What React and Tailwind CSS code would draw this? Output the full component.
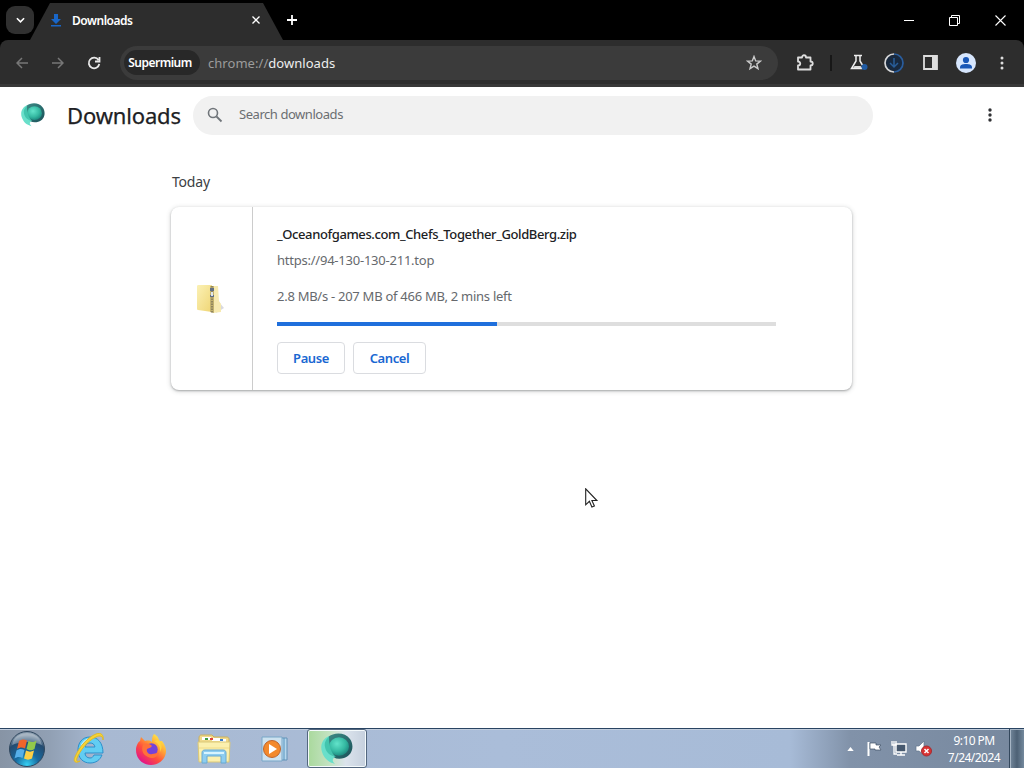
import React, { useState } from 'react';

const PROGRESS = 44;

const SupermiumLogo = ({ id, className }) => (
  <svg viewBox="0 0 32 32" className={className}>
    <defs>
      <radialGradient id={`${id}-ball`} cx="0.4" cy="0.35" r="0.7">
        <stop offset="0" stopColor="#62e3ca" />
        <stop offset="0.6" stopColor="#35b9a2" />
        <stop offset="1" stopColor="#1a857c" />
      </radialGradient>
      <linearGradient id={`${id}-dark`} x1="0" y1="0" x2="1" y2="1">
        <stop offset="0" stopColor="#3c8b86" />
        <stop offset="1" stopColor="#1a5058" />
      </linearGradient>
    </defs>
    <path d="M7 4C13-1 24-1 29 6c5 7 2 17-6 19-6 2-12 0-15-5Z" fill={`url(#${id}-dark)`} />
    <path d="M8 3C1 6-1 13 1 19c2 6 6 10 13 12-3-3-3-5 0-7C9 20 6 12 8 3Z" fill="#69dfca" />
    <ellipse cx="18" cy="13.5" rx="10" ry="9.2" fill={`url(#${id}-ball)`} />
    <path d="M8 4c0 9 2 16 7 20-5-1-10-4-11-10-1-4 1-8 4-10Z" fill="#43c5ae" />
  </svg>
);

const ZipFolder = () => (
  <svg viewBox="0 0 32 32" className="w-8 h-8">
    <defs>
      <linearGradient id="zip-face" x1="0" y1="0" x2="1" y2="1">
        <stop offset="0" stopColor="#fbf1b5" />
        <stop offset="1" stopColor="#efd574" />
      </linearGradient>
    </defs>
    <path d="m22 30 8-5-5-6Z" fill="#c9c9d2" opacity=".7" />
    <path d="M18 3h6l1 15 2 3v8l-8 1Z" fill="#f7eab0" />
    <path d="M3 3c0-1 1-1 2-1h13v27L4 27c-1 0-1-1-1-2Z" fill="url(#zip-face)" />
    <path d="M16 3h4v27l-4-1Z" fill="#c3b26f" />
    <path d="M18 3v27" stroke="#81785a" strokeWidth="1.5" strokeDasharray="1.5 1" />
    <path d="M16 5h4v3h-4zM16 12h4v2h-4z" fill="#627084" />
    <path d="M17 9h2v4h-2z" fill="#dfe5e9" />
  </svg>
);

const StartOrb = () => (
  <svg viewBox="0 0 38 38" className="w-[38px] h-[38px]">
    <defs>
      <radialGradient id="orb" cx="0.5" cy="0.95" r="0.85">
        <stop offset="0" stopColor="#35d0f4" />
        <stop offset="0.4" stopColor="#17699f" />
        <stop offset="0.8" stopColor="#244b70" />
        <stop offset="1" stopColor="#8296a9" />
      </radialGradient>
    </defs>
    <circle cx="19" cy="19" r="17.5" fill="url(#orb)" stroke="#30475e" />
    <path d="M4 15C6 6 13 3 19 3s13 3 15 12c-9-4-21-4-30 0Z" fill="#fff" opacity=".3" />
    <path d="M11 11c3-2 5-2 8-.5l-2 8c-3-1.500-5-1.500-8 .5Z" fill="#f0642b" />
    <path d="M20.500 11c3 1.500 5 1.500 8-.5l-2 8.500c-3 2-5 1.500-8 0Z" fill="#91c84b" />
    <path d="M8.500 20.500c3-2 5-2 8-.5l-2 8c-3-1.500-5-1.500-8 .5Z" fill="#56afe9" />
    <path d="M18 20.500c3 1.500 5 1.500 8 0l-2 8c-3 1.500-5 1.500-8 0Z" fill="#fdcf45" />
  </svg>
);

const InternetExplorer = () => (
  <svg viewBox="0 0 32 32" className="w-8 h-8">
    <path d="M17 4C9 4 5 10 5 17c0 8 5 13 12 13 6 0 10-3 12-8h-8c-1 2-2 3-4 3-3 0-5-2-5-5h18C30 10 25 4 17 4Zm-5 10c1-3 2-4 5-4s4 1 5 4Z" fill="#62cdf2" stroke="#2c8fcb" strokeWidth="1" fillRule="evenodd" />
    <path d="M8 15C9 9 13 6 18 6" fill="none" stroke="#b8eefb" strokeWidth="1.500" />
    <path d="M30 7c0-4-3-5-7-3C14 8 7 18 4 25c-1 3 0 4 3 3-5 3-7 0-5-4C6 14 15 4 23 1c5-2 8 1 7 6Z" fill="#f7d335" stroke="#dfb928" strokeWidth="1" />
  </svg>
);

const Firefox = () => (
  <svg viewBox="0 0 32 32" className="w-8 h-8">
    <defs>
      <linearGradient id="fox" x1="0.85" y1="0.05" x2="0.2" y2="0.9">
        <stop offset="0" stopColor="#fff44f" />
        <stop offset="0.35" stopColor="#ffa436" />
        <stop offset="0.65" stopColor="#ff4f3c" />
        <stop offset="1" stopColor="#e31587" />
      </linearGradient>
    </defs>
    <path d="M19 1c4 2 5 5 5 7l3 0c3 4 4 7 4 10 0 8-7 14-15 14S1 26 1 17c0-4 2-8 4-9l1-4 4 4c4-1 6 0 7 1 0-3 0-6 2-8Z" fill="url(#fox)" />
    <circle cx="16.500" cy="16.5" r="6.2" fill="#7542d9" />
    <path d="M8 12c3-3 7-1 9 1-1 2-4 2-5 3-1 3 2 6 5 5 3 0 5-2 7-1-2 5-7 6-11 4-5-2-7-7-5-12Z" fill="#ff7139" />
    <path d="M19 8c4 2 7 6 6 11 2-3 2-7 1-10l-3-3c-1 1-2 2-4 2Z" fill="#ffd13f" />
  </svg>
);

const Explorer = () => (
  <svg viewBox="0 0 34 30" className="w-[34px] h-[30px]">
    <path d="M2 4c0-2 1-3 2-3h11l2 2h13c1 0 2 1 2 2v21H2Z" fill="#f0d98a" stroke="#c9b05e" />
    <path d="M5 3h9v3H5zM15 4h8v3h-8zM23 5h6v3h-6z" fill="#fff" />
    <path d="M8 4h3v2H8z" fill="#409d42" />
    <path d="M13 4h3v2h-3z" fill="#df423b" />
    <path d="M23 5h3v2h-3z" fill="#397dcc" />
    <path d="M1 8h32l-1 20H2Z" fill="#fbf0ae" stroke="#dbc879" />
    <path d="M2 14h30" stroke="#f1dc88" />
    <path d="M5 29V19c0-2 1-3 3-3h18c2 0 3 1 3 3v10h-5v-7H10v7Z" fill="#8dcdf0" stroke="#68a9d2" />
    <path d="M7 19h20" stroke="#d7f4ff" strokeWidth="2" />
  </svg>
);

const MediaPlayer = () => (
  <svg viewBox="0 0 28 26" className="w-7 h-[26px]">
    <path d="M8 2h18v22H8z" fill="#b7d8ee" stroke="#6292b7" />
    <path d="M23 2v22M20 2v22" stroke="#5793bd" />
    <path d="M1 1h20v24H1z" fill="#cde2ef" stroke="#78a7c8" />
    <circle cx="11" cy="13" r="8.500" fill="#f3892b" stroke="#bf652d" />
    <path d="m8 8 8 5-8 5Z" fill="#fff" />
  </svg>
);

const TabStrip = () => (
  <div className="flex h-10 bg-black text-white">
    <button className="flex items-center justify-center w-7 h-7 ml-1.5 mt-1.5 rounded-[9px] bg-[#303030]">
      <svg viewBox="0 0 10 6" className="w-[9px] h-[6px]"><path d="m1 1 4 4 4-4" fill="none" stroke="#fff" strokeWidth="1.800" /></svg>
    </button>
    <div className="flex items-center w-[253px] h-[37px] -ml-1 mt-[3px] pl-5 pr-[23px] bg-[#2d2d2d] [clip-path:polygon(20px_0,233px_0,253px_100%,0_100%)]">
      <svg viewBox="0 0 12 14" className="w-3 h-3.5 mb-1"><path d="M4 1h4v5h3l-5 5-5-5h3ZM1 12h10v1.500H1Z" fill="#1966c7" /></svg>
      <span className="ml-[10px] mb-[2px] text-[12px] font-semibold tracking-[-0.48px]">Downloads</span>
      <svg viewBox="0 0 8 8" className="w-2 h-2 ml-auto mb-[3px]"><path d="m.5.5 7 7m0-7-7 7" stroke="#fff" strokeWidth="1.300" /></svg>
    </div>
    <svg viewBox="0 0 10 10" className="w-2.5 h-2.5 mt-[15px] ml-1"><path d="M5 0v10M0 5h10" stroke="#fff" strokeWidth="1.800" /></svg>
    <div className="flex items-center gap-[35px] h-10 ml-auto mr-[18px]">
      <svg viewBox="0 0 10 10" className="w-2.5 h-2.5"><path d="M0 5.500h10" stroke="#fff" /></svg>
      <svg viewBox="0 0 11 11" className="w-[11px] h-[11px]"><path d="M.5 2.500h8v8h-8ZM2.500 2.500v-2h8v8h-2" fill="none" stroke="#fff" /></svg>
      <svg viewBox="0 0 11 11" className="w-[11px] h-[11px]"><path d="m.5.5 10 10m0-10-10 10" stroke="#fff" strokeWidth="1.100" /></svg>
    </div>
  </div>
);

const Toolbar = () => (
  <div className="bg-black">
    <div className="flex items-center h-[47px] pt-px bg-[#2d2d2d] rounded-t-lg border-b-[3px] border-[#383838]">
      <svg viewBox="0 0 12 12" className="w-3 h-3 ml-4"><path d="M12 6H1m5-5L1 6l5 5" fill="none" stroke="#777" strokeWidth="1.500" /></svg>
      <svg viewBox="0 0 12 12" className="w-3 h-3 ml-6"><path d="M0 6h11M6 1l5 5-5 5" fill="none" stroke="#777" strokeWidth="1.500" /></svg>
      <svg viewBox="0 0 14 14" className="w-3.5 h-3.5 ml-[23px]"><path d="M11.500 4A5.300 5.300 0 1 0 12.300 8M12.500 1v4.500H8" fill="none" stroke="#e8e8e8" strokeWidth="1.800" /></svg>
      <div className="flex items-center w-[658px] h-[34px] ml-[19px] pl-1 pr-4 rounded-full bg-[#3b3b3b]">
        <span className="flex items-center justify-center w-[76px] h-[25px] pr-1 rounded-full bg-[#282828] text-[12px] font-semibold text-white tracking-[-0.5px]">Supermium</span>
        <span className="ml-2 text-[13px] text-[#9c9c9c] leading-5 tracking-[0.04px]">chrome://<span className="text-[#eee]">downloads</span></span>
        <svg viewBox="0 0 16 16" className="w-4 h-4 ml-auto"><path d="m8 1.500 1.700 4.400 4.800.2-3.700 3 1.200 4.600L8 11.100l-4 2.600 1.200-4.600-3.700-3 4.800-.2Z" fill="none" stroke="#ccc" strokeWidth="1.400" /></svg>
      </div>
      <svg viewBox="0 0 18 18" className="w-[18px] h-[18px] ml-[18px]"><path d="M2 3.500h4c0-3 4-3 4 0h4.500v4c3 0 3 4 0 4v4H2v-4c3 0 3-4 0-4Z" fill="none" stroke="#ddd" strokeWidth="1.800" strokeLinejoin="round" /></svg>
      <div className="w-0.5 h-4 ml-4 bg-[#171717]" />
      <svg viewBox="0 0 18 17" className="w-[18px] h-[17px] ml-[18px]">
        <path d="M4 1.500h8M6 2v5l-4.500 7.500h11M10 2v5l3 5" fill="none" stroke="#eee" strokeWidth="1.500" />
        <path d="M4.500 12h6l2 2h-9.500Z" fill="#ddd" />
        <circle cx="14.500" cy="13" r="3" fill="#205ba3" />
      </svg>
      <svg viewBox="0 0 20 20" className="w-5 h-5 ml-4">
        <circle cx="10" cy="10" r="8" fill="#18293f" />
        <path d="M10 1a9 9 0 0 0 0 18" fill="none" stroke="#d5d7da" strokeWidth="1.700" />
        <path d="M10 1a9 9 0 0 1 0 18" fill="none" stroke="#295d9e" strokeWidth="1.700" />
        <path d="M10 5v9m-4-4 4 4 4-4" fill="none" stroke="#285d99" strokeWidth="1.500" />
      </svg>
      <svg viewBox="0 0 15 15" className="w-[15px] h-[15px] ml-[19px]"><path d="M1 1h13v13H1Z" fill="none" stroke="#ddd" strokeWidth="1.800" /><path d="M9 1h5v13H9Z" fill="#ddd" /></svg>
      <svg viewBox="0 0 20 20" className="w-5 h-5 ml-[18px]"><circle cx="10" cy="10" r="10" fill="#d7e6fd" /><circle cx="10" cy="7" r="3.100" fill="#1957b7" /><path d="M4 14.500c0-3 3-3.500 6-3.500s6 .5 6 3.500v1H4Z" fill="#1957b7" /></svg>
      <svg viewBox="0 0 4 14" className="w-1 h-3.5 ml-6" fill="#ddd"><circle cx="2" cy="2" r="1.500" /><circle cx="2" cy="7" r="1.500" /><circle cx="2" cy="12" r="1.500" /></svg>
    </div>
  </div>
);

const PageHeader = ({ query, setQuery }) => (
  <div className="flex items-center h-[57px] pb-px">
    <SupermiumLogo id="page" className="w-6 h-6 ml-[21px]" />
    <h1 className="w-[114px] ml-[22px] text-[22px] leading-7 tracking-[-0.15px] text-[#202124] [-webkit-text-stroke:0.25px_#202124] whitespace-nowrap">Downloads</h1>
    <label className="flex items-center w-[680px] h-[39px] ml-3 rounded-full bg-[#f1f1f1]">
      <svg viewBox="0 0 16 16" className="w-4 h-4 ml-3.5 mb-px"><circle cx="6" cy="6" r="4.500" fill="none" stroke="#70757a" strokeWidth="1.600" /><path d="m9.500 9.500 5 5" stroke="#70757a" strokeWidth="1.800" /></svg>
      <input
        value={query}
        onChange={(e) => setQuery(e.target.value)}
        placeholder="Search downloads"
        className="flex-1 ml-4 text-[13px] tracking-[-0.45px] outline-none placeholder:text-[#6b6e72]"
      />
    </label>
    <svg viewBox="0 0 4 14" className="w-1 h-3.5 ml-[115px]" fill="#303134"><circle cx="2" cy="2" r="1.700" /><circle cx="2" cy="7" r="1.700" /><circle cx="2" cy="12" r="1.700" /></svg>
  </div>
);

const DownloadCard = () => (
  <div className="flex w-[681px] h-[183px] mt-[15px] -ml-px rounded-lg bg-white shadow-[0_1px_2px_rgba(60,64,67,.35),0_1px_4px_1px_rgba(60,64,67,.17)]">
    <div className="flex items-center justify-center w-[82px] pr-1 border-r border-[#ccc]">
      <ZipFolder />
    </div>
    <div className="pl-6 pt-[17px] text-[13px] text-[#66696d]">
      <div className="leading-5 font-medium text-[#202124] tracking-[-0.39px]">_Oceanofgames.com_Chefs_Together_GoldBerg.zip</div>
      <div className="mt-1.5 leading-5 tracking-[-0.23px]">https://94-130-130-211.top</div>
      <div className="mt-4 leading-5 tracking-[-0.27px]">2.8 MB/s - 207 MB of 466 MB, 2 mins left</div>
      <div className="w-[499px] h-1 mt-4 bg-[#dedede]">
        <div className="h-full bg-[#1f6fdc]" style={{ width: `${PROGRESS}%` }} />
      </div>
      <div className="flex gap-2 mt-4 font-semibold text-[#1967d2] tracking-[-0.4px]">
        <button className="w-[68px] h-8 pt-px rounded border border-[#dadce0]">Pause</button>
        <button className="w-[73px] h-8 pt-px rounded border border-[#dadce0]">Cancel</button>
      </div>
    </div>
  </div>
);

const Taskbar = () => (
  <div className="flex items-center h-10 border-t border-[#294462] shadow-[inset_0_1px_0_#c2cede] bg-[linear-gradient(90deg,#8794a5_0,#91a0b4_50px,#a8b9d2_100px,#aabdd9_500px,#a7bbd7_790px,#8192a9_850px,#77889e_100%)]">
    <div className="w-[38px] ml-2"><StartOrb /></div>
    <div className="ml-[27px]"><InternetExplorer /></div>
    <div className="ml-[30px]"><Firefox /></div>
    <div className="ml-[30px]"><Explorer /></div>
    <div className="ml-[30px]"><MediaPlayer /></div>
    <div className="flex items-center justify-center w-[60px] h-[39px] ml-[18px] rounded-[3px] border border-[#53677f] shadow-[inset_0_0_0_1px_#f4fafc] bg-[linear-gradient(90deg,#a9d99c,#c6e3c5_40%,#dbe3ec_65%,#c5d0de)]">
      <SupermiumLogo id="task" className="w-8 h-8" />
    </div>
    <svg viewBox="0 0 8 5" className="w-[7px] h-[4px] ml-auto"><path d="m0 5 4-5 4 5Z" fill="#fff" /></svg>
    <svg viewBox="0 0 16 16" className="w-4 h-4 ml-[13px]"><path d="M1.500 1v14" stroke="#fff" strokeWidth="2" /><path d="M3 2h6v2h5l-2 2 2 3H8V8H3Z" fill="#fff" stroke="#405065" strokeWidth=".7" /></svg>
    <svg viewBox="0 0 17 17" className="w-[17px] h-[17px] ml-2"><path d="M5 4h10v8H5ZM10 12v3m-4 0h8" fill="#46586e" stroke="#fff" strokeWidth="1.400" /><path d="M1 1v4h4V1M3 1v13h3" fill="none" stroke="#fff" strokeWidth="1.300" /></svg>
    <svg viewBox="0 0 18 18" className="w-[18px] h-[18px] ml-[7px]"><path d="M1 6h3l5-5v14l-5-4H1Z" fill="#fff" stroke="#62758c" strokeWidth=".7" /><circle cx="11.500" cy="11" r="5" fill="#d93232" stroke="#a52c31" /><path d="m9.500 9 4 4m0-4-4 4" stroke="#fff" strokeWidth="1.500" /></svg>
    <div className="w-[70px] ml-1.5 text-center text-[12px] leading-[17px] text-white tracking-[-0.6px]">
      <div>9:10 PM</div>
      <div className="tracking-[-0.52px]">7/24/2024</div>
    </div>
    <div className="w-[15px] h-[39px] border-l border-[#33475c] shadow-[inset_1px_1px_0_#a6b5c4] bg-[linear-gradient(90deg,#73879b,#4d6175,#74899d)]" />
  </div>
);

const App = () => {
  const [query, setQuery] = useState('');

  return (
    <div className="relative flex flex-col w-[1024px] h-[768px] overflow-hidden bg-white font-['Noto_Sans',sans-serif]">
      <TabStrip />
      <Toolbar />
      <PageHeader query={query} setQuery={setQuery} />
      <main className="flex-1 pl-[172px] pt-7">
        <h2 className="text-[14px] leading-5 tracking-[-0.2px] text-[#3c4043]">Today</h2>
        <DownloadCard />
      </main>
      <Taskbar />
      <svg viewBox="0 0 14 21" className="absolute left-[585px] top-[488px] w-3.5 h-[21px]"><path d="M.7.8v16l3.700-3.500 2.500 5.700 2.500-1-2.500-5.500h5Z" fill="#fff" stroke="#222" strokeWidth="1.100" /></svg>
    </div>
  );
};

export default App;
